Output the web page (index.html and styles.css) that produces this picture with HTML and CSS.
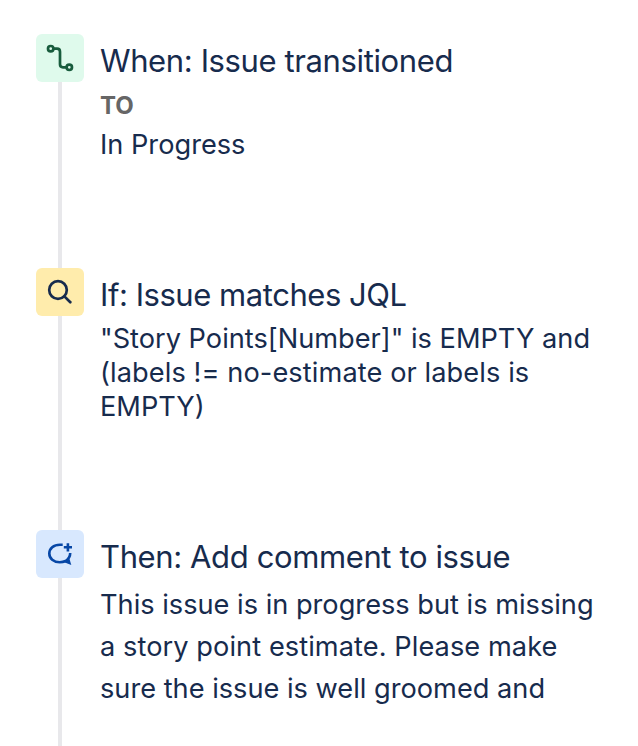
FILE: index.html
```html
<!DOCTYPE html>
<html lang="en">
<head>
<meta charset="utf-8">
<title>Automation rule</title>
<link rel="stylesheet" href="styles.css">
</head>
<body>
<main class="rule">
  <section class="step step-trigger">
    <div class="rail">
      <div class="icon icon-trigger">
        <svg viewBox="0 0 48 48" fill="none" stroke="currentColor" stroke-width="2.7"><circle cx="14.7" cy="14.7" r="2.7"/><circle cx="33.3" cy="33.3" r="2.7"/><path d="M17.6 14.7H21Q24 14.7 24 17.7V30.3Q24 33.3 27 33.3H30.5"/></svg>
      </div>
    </div>
    <div class="content">
      <h2 class="title title-trigger">When: Issue transitioned</h2>
      <div class="label">TO</div>
      <p class="text status">In Progress</p>
    </div>
  </section>
  <section class="step step-condition">
    <div class="rail">
      <div class="icon icon-condition">
        <svg viewBox="0 0 48 48" fill="none" stroke="currentColor" stroke-width="2.7" stroke-linecap="round"><circle cx="22" cy="22" r="8.8"/><path d="M28.4 28.4L34.3 34.3"/></svg>
      </div>
    </div>
    <div class="content">
      <h2 class="title title-condition">If: Issue matches JQL</h2>
      <p class="text query">"Story Points[Number]" is EMPTY and<br><span class="query-exclusion">(labels != no-estimate or labels is</span><br>EMPTY)</p>
    </div>
  </section>
  <section class="step step-action">
    <div class="rail">
      <div class="icon icon-action">
        <svg viewBox="0 0 48 48" fill="none" stroke="currentColor" stroke-width="2.6"><path d="M26.7 14.7H24C17.5 14.7 13.3 18.6 13.3 23.6S17.6 32.3 23.7 32.3Q27 32.3 29.6 31Q34.2 28 34.2 23M31.9 13.2V21.4M27.8 17.3H36"/><path d="M27.5 32L33.2 28L35.3 35Z" fill="currentColor" stroke="none"/></svg>
      </div>
    </div>
    <div class="content">
      <h2 class="title title-action">Then: Add comment to issue</h2>
      <p class="text comment">This issue is in progress but is missing<br><span class="comment-request">a story point estimate. Please make</span><br>sure the issue is well groomed and</p>
    </div>
  </section>
</main>
</body>
</html>
```
FILE: styles.css
```css
* { box-sizing: border-box; }
body {
  margin: 0;
  background: #fff;
  color: #172b4d;
  font-family: Inter, "Liberation Sans", sans-serif;
  overflow: hidden;
}
.rule { height: 746px; padding: 34px 0 0 36px; overflow: hidden; }
.step { display: flex; gap: 16px; }
.step-trigger { height: 234px; }
.step-condition { height: 262px; }
.step-action { height: 216px; }
.rail {
  width: 48px;
  flex: none;
  background: linear-gradient(#e8e8eb, #e8e8eb) center / 4px 100% no-repeat;
}
.icon { width: 48px; height: 48px; border-radius: 6px; }
.icon svg { display: block; width: 48px; height: 48px; }
.icon-trigger { background: #dffaec; color: #185c3d; }
.icon-condition { background: #ffecac; color: #172b4d; }
.icon-action { background: #d8e8fe; color: #0747a6; }
.content { padding-top: 7px; white-space: nowrap; }
.title { margin: 0; font-size: 31px; line-height: 40px; font-weight: 430; letter-spacing: -0.38px; }
.title-condition { letter-spacing: -0.45px; }
.label { margin-top: 8px; font-size: 24px; line-height: 34px; font-weight: 700; color: #666; }
.text { margin: 7px 0 0; font-size: 27.2px; line-height: 34px; font-weight: 430; }
.status { margin-top: 5px; }
.query-exclusion { letter-spacing: 0.09px; }
.comment { line-height: 42px; }
.comment-request { letter-spacing: 0.07px; }
```
